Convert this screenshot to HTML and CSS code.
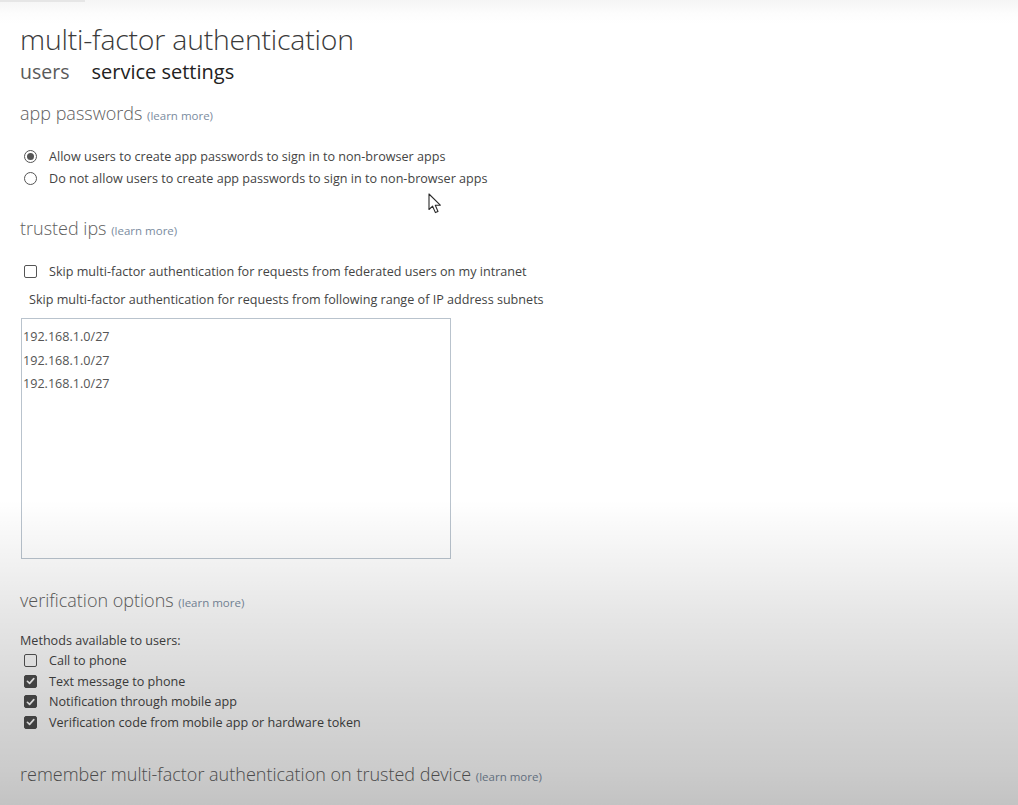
FILE: index.html
```html
<!DOCTYPE html>
<html>
<head>
<meta charset="utf-8">
<link rel="stylesheet" href="styles.css">
</head>
<body>
<div class="topline"></div>
<main class="page">
  <h1 class="title">multi-factor authentication</h1>
  <nav class="tabs">
    <span class="tab">users</span>
    <span class="tab active">service settings</span>
  </nav>

  <section class="sec sec-app">
    <h2 class="sec-title">app passwords <a class="learn">(learn more)</a></h2>
    <div class="opts">
      <label class="opt"><span class="radio on"></span><span>Allow users to create app passwords to sign in to non-browser apps</span></label>
      <label class="opt"><span class="radio"></span><span>Do not allow users to create app passwords to sign in to non-browser apps</span></label>
    </div>
  </section>

  <section class="sec sec-ips">
    <h2 class="sec-title">trusted ips <a class="learn">(learn more)</a></h2>
    <label class="opt opt-fed"><span class="cb"></span><span>Skip multi-factor authentication for requests from federated users on my intranet</span></label>
    <p class="subnet-label">Skip multi-factor authentication for requests from following range of IP address subnets</p>
    <div class="ipbox">
      <div class="ip">192.168.1.0/27</div>
      <div class="ip">192.168.1.0/27</div>
      <div class="ip">192.168.1.0/27</div>
    </div>
  </section>

  <section class="sec sec-ver">
    <h2 class="sec-title">verification options <a class="learn">(learn more)</a></h2>
    <p class="methods">Methods available to users:</p>
    <div class="checks">
      <label class="chk"><span class="cb"></span><span>Call to phone</span></label>
      <label class="chk"><span class="cb on"><svg viewBox="0 0 12 12" width="12" height="12"><path d="M2.6 6.3 L5 8.6 L9.6 3.4" fill="none" stroke="#fff" stroke-width="1.8" stroke-linecap="round" stroke-linejoin="round"/></svg></span><span>Text message to phone</span></label>
      <label class="chk"><span class="cb on"><svg viewBox="0 0 12 12" width="12" height="12"><path d="M2.6 6.3 L5 8.6 L9.6 3.4" fill="none" stroke="#fff" stroke-width="1.8" stroke-linecap="round" stroke-linejoin="round"/></svg></span><span>Notification through mobile app</span></label>
      <label class="chk"><span class="cb on"><svg viewBox="0 0 12 12" width="12" height="12"><path d="M2.6 6.3 L5 8.6 L9.6 3.4" fill="none" stroke="#fff" stroke-width="1.8" stroke-linecap="round" stroke-linejoin="round"/></svg></span><span>Verification code from mobile app or hardware token</span></label>
    </div>
  </section>

  <section class="sec sec-rem">
    <h2 class="sec-title">remember multi-factor authentication on trusted device <a class="learn">(learn more)</a></h2>
  </section>
</main>

<svg class="cursor" width="16" height="22" viewBox="0 0 16 22">
  <path d="M1 1 L1 16.5 L4.6 13.2 L7.4 19.6 L10 18.5 L7.3 12.2 L12.3 12.2 Z" fill="#fff" stroke="#2a2a2a" stroke-width="1.1" stroke-linejoin="round"/>
</svg>
<div class="shade"></div>
</body>
</html>
```

FILE: styles.css
```css
html, body {
  margin: 0;
  padding: 0;
}
body {
  width: 1018px;
  height: 805px;
  overflow: hidden;
  background: linear-gradient(to bottom, #f5f5f5 0px, #fdfdfd 14px, #ffffff 24px);
  font-family: "Open Sans", "Noto Sans", sans-serif;
  color: #444;
  position: relative;
}
.topline {
  width: 85px;
  height: 2px;
  background: #e6e6e6;
}
.page {
  padding: 0 0 0 20px;
}
.title {
  margin: 0;
  padding-top: 19px;
  font-size: 28.4px;
  font-weight: 300;
  line-height: 36px;
  color: #3a3a3a;
  letter-spacing: -0.2px;
}
.tabs {
  display: flex;
  gap: 22px;
  margin-top: 1px;
}
.tab {
  font-size: 19.5px;
  font-weight: 400;
  line-height: 28px;
  color: #5a5a5a;
}
.tab.active {
  color: #222;
  font-size: 20px;
}
.sec-title {
  margin: 0;
  font-size: 18px;
  font-weight: 300;
  line-height: 26px;
  color: #5e5e5e;
}
.learn {
  font-size: 11.5px;
  color: #7b8ca0;
  font-weight: 400;
}
.sec-app {
  margin-top: 14px;
}
.opts {
  margin-top: 16px;
  display: flex;
  flex-direction: column;
}
.opt {
  display: flex;
  align-items: center;
  gap: 12px;
  height: 22px;
  font-size: 12.6px;
  color: #444;
  padding-left: 4px;
}
.radio {
  width: 11px;
  height: 11px;
  border: 1px solid #555;
  border-radius: 50%;
  flex: none;
  position: relative;
  background: #fff;
}
.radio.on::after {
  content: "";
  position: absolute;
  left: 2px;
  top: 2px;
  width: 7px;
  height: 7px;
  border-radius: 50%;
  background: #555;
}
.sec-ips {
  margin-top: 26px;
}
.opt-fed {
  margin-top: 16px;
}
.cb {
  width: 11px;
  height: 11px;
  border: 1px solid #555;
  border-radius: 2px;
  flex: none;
  display: flex;
  align-items: center;
  justify-content: center;
  background: #fff;
}
.cb.on {
  background: #4e4e4e;
  border-color: #4e4e4e;
}
.subnet-label {
  margin: 9px 0 0 9px;
  font-size: 12.6px;
  line-height: 18px;
  color: #444;
}
.ipbox {
  margin: 9px 0 0 1px;
  width: 430px;
  height: 241px;
  border: 1px solid #b9c3cd;
  background: #fff;
  padding-top: 6px;
  box-sizing: border-box;
}
.ip {
  font-size: 12.6px;
  line-height: 23.5px;
  color: #555;
  padding-left: 1px;
}
.sec-ver {
  margin-top: 28px;
}
.methods {
  margin: 16px 0 0;
  font-size: 12.6px;
  line-height: 18px;
  color: #444;
}
.checks {
  display: flex;
  flex-direction: column;
}
.chk {
  display: flex;
  align-items: center;
  gap: 12px;
  height: 20.7px;
  font-size: 12.6px;
  color: #444;
  padding-left: 4px;
}
.sec-rem {
  margin-top: 28px;
}
.cursor {
  position: absolute;
  left: 428px;
  top: 193px;
}
.shade {
  position: absolute;
  left: 0;
  top: 0;
  width: 1018px;
  height: 805px;
  pointer-events: none;
  background: linear-gradient(to bottom, rgba(0,0,0,0) 0px, rgba(0,0,0,0) 500px, rgba(0,0,0,0.05) 560px, rgba(0,0,0,0.1) 620px, rgba(0,0,0,0.16) 700px, rgba(0,0,0,0.205) 770px, rgba(0,0,0,0.235) 805px);
}
```
